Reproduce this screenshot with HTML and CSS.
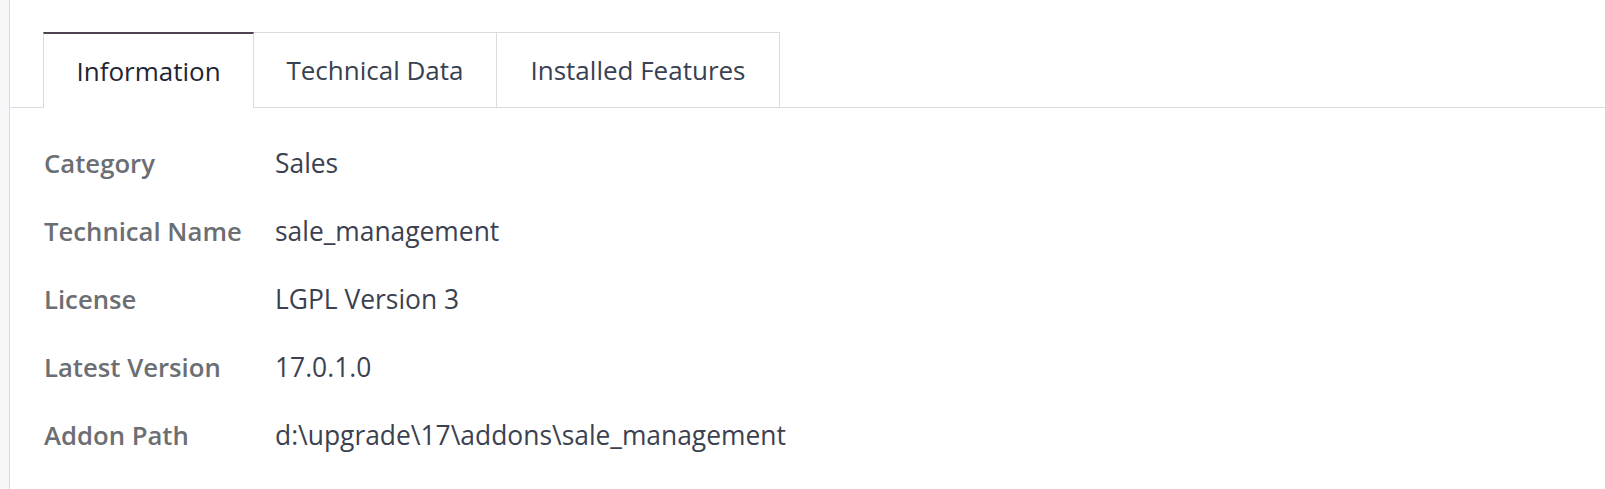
FILE: index.html
```html
<!DOCTYPE html>
<html>
<head>
<meta charset="utf-8">
<link rel="stylesheet" href="styles.css">
</head>
<body>
<div class="page">
  <div class="side"></div>
  <div class="content">
    <div class="tabs">
      <div class="tab active">Information</div>
      <div class="tab">Technical Data</div>
      <div class="tab">Installed Features</div>
    </div>
    <div class="fields">
      <div class="row"><div class="label">Category</div><div class="value">Sales</div></div>
      <div class="row"><div class="label">Technical Name</div><div class="value">sale_management</div></div>
      <div class="row"><div class="label">License</div><div class="value">LGPL Version 3</div></div>
      <div class="row"><div class="label">Latest Version</div><div class="value">17.0.1.0</div></div>
      <div class="row"><div class="label">Addon Path</div><div class="value">d:\upgrade\17\addons\sale_management</div></div>
    </div>
  </div>
</div>
</body>
</html>
```
FILE: styles.css
```css
html, body {
  margin: 0;
  padding: 0;
  background: #ffffff;
}
body {
  font-family: "Open Sans", "Noto Sans", sans-serif;
  font-size: 26px;
  color: #374151;
}
.page {
  display: flex;
  height: 489px;
}
.side {
  width: 9px;
  background: #f6f7f8;
  border-right: 1px solid #d9dbde;
  flex: none;
}
.content {
  flex: 1;
  padding-top: 32px;
}
.tabs {
  display: flex;
  padding-left: 33px;
  border-bottom: 1px solid #d9dbde;
  height: 76px;
  box-sizing: border-box;
}
.tab {
  display: flex;
  align-items: center;
  justify-content: center;
  border: 1px solid #d9dbde;
  border-bottom: none;
  border-left: none;
  box-sizing: border-box;
  color: #374151;
  height: 75px;
}
.tab:first-child {
  border-left: 1px solid #d9dbde;
}
.tab.active {
  width: 211px;
  border-top: 2px solid #4f4351;
  color: #1f2532;
  background: #fff;
  margin-bottom: -1px;
  height: 76px;
}
.tab:nth-child(2) { width: 243px; }
.tab:nth-child(3) { width: 283px; }
.fields {
  padding-left: 34px;
  padding-top: 38px;
}
.row {
  display: flex;
  height: 68px;
  align-items: flex-start;
}
.label {
  width: 231px;
  font-weight: 600;
  font-size: 25.7px;
  color: #6b6e73;
}
.value {
  font-size: 26.4px;
  line-height: 35px;
  color: #3b4150;
}
```
